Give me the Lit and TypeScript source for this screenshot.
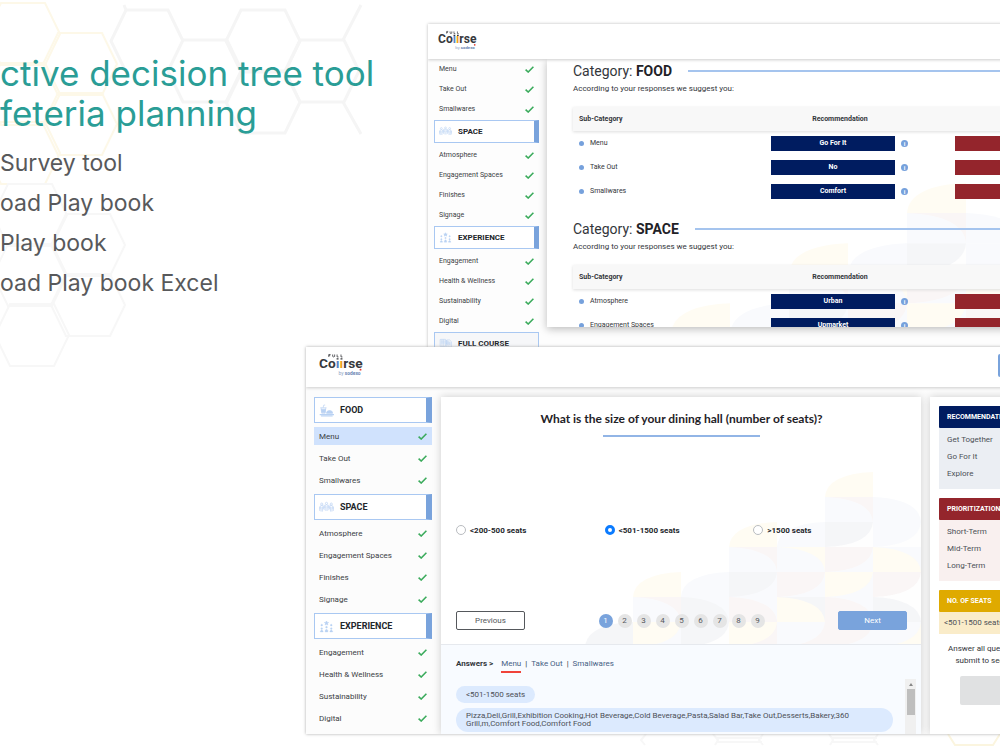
import { LitElement, html, svg, css, nothing } from "lit";
import { customElement, property, state } from "lit/decorators.js";
import { classMap } from "lit/directives/class-map.js";

type IconName = "food" | "space" | "experience" | "course";
interface Group {
  name: string;
  icon: IconName;
  items: string[];
}

const GROUPS: Group[] = [
  { name: "FOOD", icon: "food", items: ["Menu", "Take Out", "Smallwares"] },
  { name: "SPACE", icon: "space", items: ["Atmosphere", "Engagement Spaces", "Finishes", "Signage"] },
  { name: "EXPERIENCE", icon: "experience", items: ["Engagement", "Health & Wellness", "Sustainability", "Digital"] },
];

const person = (x: number, y: number) => svg`
  <circle cx=${x} cy=${y} r="1.6" />
  <path d="M${x - 2.4} ${y + 7}v-3q0-2 2.4-2t2.4 2v3M${x - 1} ${y + 4}v7M${x + 1} ${y + 4}v7" />`;

const ICONS = {
  food: svg`
    <path d="M2 5h9M3 5l1 8h5l1-8M6 5l1-4h2" />
    <path d="M3.500 7h6l-.6 5H4.200z" fill="currentColor" />
    <path d="M11 13q0-4 4.500-4t4.500 4z" fill="currentColor" />
    <path d="M1 15h21M3 17h17M11 14.500h9" stroke-width="1.600" />`,
  space: svg`${person(4, 4)}${person(11, 3)}${person(18, 4)}
    <path d="M1 8v6M7.500 5v8M14.500 5v8M21 8v6" />`,
  experience: svg`
    <path d="M11 1l1 2 2 .2-1.500 1.400.4 2L11 5.600 9.100 6.600l.4-2L8 3.200 10 3z" fill="currentColor" />
    <g fill="currentColor" stroke-width=".5">
      <circle cx="4" cy="7" r="1.300" /><circle cx="18" cy="7" r="1.300" />
      <circle cx="4" cy="12" r="1.300" /><circle cx="11" cy="10" r="1.300" /><circle cx="18" cy="12" r="1.300" />
      <path d="M2 16q2-4 4 0v1H2zM9 15q2-4 4 0v2H9zM16 16q2-4 4 0v1h-4z" />
    </g>`,
  course: svg`
    <path d="M2 2h9v12H2zM3 5h7M3 8h7M5 2v12M8 2v12" />
    <path d="M13 3h5l3 3v9h-8zM12 9l6 6" />
    <path d="M12 4l7 3v5l-7-3z" fill="currentColor" opacity=".6" />`,
};

/* Brand mark: coloured double-i in place of the "u" */
@customElement("brand-logo")
export class BrandLogo extends LitElement {
  static styles = css`
    :host { display: block; }
    svg { display: block; width: 100%; height: auto; overflow: visible; }
    .word { font: 700 14px Roboto, sans-serif; fill: #37393d; }
    .by { font: 400 5px Roboto, sans-serif; fill: #8fa4c4; }
    .blue { fill: #5a83c4; }
    .amber { fill: #f0a21c; }
    .sub { font-weight: 700; fill: #6b86b3; }
  `;
  render() {
    return html`<svg viewBox="0 0 44 22" role="img" aria-label="Full Course by Sodexo">
      <text class="word" x="0" y="14">Co<tspan class="blue">ı</tspan><tspan class="amber">ı</tspan>rse</text>
      <path d="M10 3V.500h1.800M10 1.700h1.500M14 .500V2.500q1 1 2 0V.500M18.500.500V3H20M22.500.500V3H24" fill="none" stroke="#37393d" stroke-width=".8" />
      <path d="M18 5h2M22 5h2" stroke="#37393d" stroke-width="1.400" />
      <text class="by" x="20" y="21">by <tspan class="sub">sodexo</tspan></text>
      <circle cx="42.500" cy="16" r="1" fill="#e23b30" />
    </svg>`;
  }
}

/* Category list with completion ticks */
@customElement("category-nav")
export class CategoryNav extends LitElement {
  @property({ type: Boolean, reflect: true }) compact = false;
  @property() active = "";

  static styles = css`
    :host {
      display: block;
      --row: 22px; --box: 26px; --above: 3px; --text: 8px; --title: 9px; --bar: 6px; --icon: 15px;
      font-family: Roboto, sans-serif;
    }
    :host([compact]) {
      --row: 20px; --box: 23px; --above: 1px; --text: 7px; --title: 8px; --bar: 5px; --icon: 13px;
    }
    ul { list-style: none; margin: 0; padding: 0; }
    .box {
      box-sizing: border-box; display: flex; align-items: center; gap: 6px;
      width: 100%; height: var(--box); margin: var(--above) 0 2px; padding: 0 4px;
      border: 1px solid #a9c8f2; border-right: var(--bar) solid #79a3dc;
      background: #fff; color: #23262b; font: 700 var(--title) Roboto, sans-serif; text-align: left;
    }
    .box.last { border-right: 1px solid #a9c8f2; background: #f6f7f9; }
    .icon { width: var(--icon); height: var(--icon); color: #b9d2f3; fill: none; stroke: currentColor; stroke-width: 1; }
    .row { box-sizing: border-box; height: var(--row); padding: 2px 0; }
    .link {
      display: flex; align-items: center; justify-content: space-between; height: 100%;
      padding: 0 5px; color: #3b3e44; font-size: var(--text); text-decoration: none;
    }
    .link.on { background: #d0e2fd; }
    .tick { width: 9px; height: 7px; fill: none; stroke: #3bab5c; stroke-width: 1.600; }
  `;

  render() {
    const groups = this.compact
      ? [...GROUPS, { name: "FULL COURSE", icon: "course" as IconName, items: [] }]
      : GROUPS;
    return html`<nav aria-label="Categories">
      ${groups.map((g, i) => html`
        ${this.compact && i === 0 ? nothing : html`
          <button class=${classMap({ box: true, last: g.icon === "course" })}>
            <svg class="icon" viewBox="0 0 22 18" aria-hidden="true">${ICONS[g.icon]}</svg>${g.name}
          </button>`}
        <ul>
          ${g.items.map((t) => html`<li class="row">
            <a href="#" class=${classMap({ link: true, on: t === this.active })}>${t}
              <svg class="tick" viewBox="0 0 9 7" aria-hidden="true"><path d="M.6 3.600l2.600 2.400L8.400.8" /></svg>
            </a></li>`)}
        </ul>`)}
    </nav>`;
  }
}

/* Faint mosaic of petals that climbs to the right */
@customElement("petal-mosaic")
export class PetalMosaic extends LitElement {
  static styles = css`
    :host { display: block; pointer-events: none; opacity: 0.8; }
    svg { display: block; width: 100%; height: 100%; }
  `;
  render() {
    const c: Record<string, string> = { y: "#fffcf1", b: "#f8fafd", r: "#faf4f4", g: "#f3f4f7", w: "#fefefe" };
    /* column, row, ground, petal, corner of the petal's centre */
    const tiles: [number, number, string, string, string][] = [
      [5, 0, "", "y", "br"], [6, 1, "", "b", "bl"],
      [5, 1, "r", "b", "bl"], [4, 2, "", "b", "br"], [3, 2, "", "y", "br"],
      [5, 2, "w", "g", "tl"], [6, 2, "w", "b", "tl"],
      [3, 3, "r", "b", "bl"], [4, 3, "y", "b", "bl"], [5, 3, "b", "r", "tl"], [6, 3, "b", "y", "bl"],
      [1, 4, "", "y", "br"], [2, 4, "", "b", "br"], [3, 4, "b", "g", "tl"], [4, 4, "b", "r", "tl"], [5, 4, "b", "y", "tl"], [6, 4, "w", "r", "tl"],
      [1, 5, "r", "b", "bl"], [2, 5, "b", "g", "bl"], [3, 5, "b", "r", "bl"], [4, 5, "g", "y", "bl"], [5, 5, "b", "r", "bl"], [6, 5, "w", "g", "bl"],
      [0, 6, "", "g", "br"], [1, 6, "b", "y", "tl"], [2, 6, "w", "g", "tl"], [3, 6, "r", "y", "tl"], [4, 6, "r", "b", "tl"], [5, 6, "b", "r", "tl"], [6, 6, "y", "b", "tl"],
    ];
    const arc: Record<string, string> = {
      br: "M48 0V25H0Q2 2 48 0z",
      bl: "M0 0Q46 2 48 25H0z",
      tl: "M0 0H48Q46 23 0 25z",
    };
    return html`<svg viewBox="0 0 336 172" preserveAspectRatio="none" aria-hidden="true">
      ${tiles.map(([x, y, ground, petal, k]) => svg`<g transform="translate(${x * 48} ${y * 25})">
        ${ground ? svg`<rect width="48" height="25" fill=${c[ground]} />` : nothing}
        <path d=${arc[k]} fill=${c[petal]} /></g>`)}
    </svg>`;
  }
}

/* Results window */
@customElement("results-window")
export class ResultsWindow extends LitElement {
  static styles = css`
    :host {
      display: flex; flex-direction: column; overflow: hidden;
      background: #fdfdfd; box-shadow: 0 0 3px #bbb; font-family: Roboto, sans-serif; color: #33363b;
    }
    .head { position: relative; flex: none; height: 35px; padding: 7px 10px; box-sizing: border-box; background: #fff; box-shadow: 0 1px 3px #ccc; z-index: 1; }
    .logo { width: 38px; }
    .body { display: flex; min-height: 0; }
    .nav { flex: none; width: 105px; padding: 0 8px 0 6px; }
    .panel { position: relative; isolation: isolate; height: 268px; overflow: hidden; box-sizing: border-box; padding: 0 26px; background: #fff; }
    .shade { flex: 1; min-width: 0; height: 268px; box-shadow: 0 2px 8px #bbb; }
    .mosaic { position: absolute; z-index: -1; left: 65px; top: 124px; width: 413px; height: 207px; }
    .section { height: 158px; }
    .title { display: flex; align-items: center; gap: 16px; margin: 0; height: 24px; font-size: 14px; font-weight: 400; }
    .title::after { content: ""; flex: 1; height: 2px; background: #a5c4ee; }
    .name { color: #1f2227; }
    .note { margin: 0; height: 24px; line-height: 12px; font-size: 8px; }
    table { table-layout: fixed; width: 566px; border-collapse: collapse; font-size: 7px; }
    .c1 { width: 198px; }
    .c2 { width: 184px; }
    th { height: 24px; padding: 0 46px 0 0; background: #f8f8f8; text-align: center; }
    th:first-child { padding: 0 6px; text-align: left; }
    thead { box-shadow: 0 1px 3px #ddd; }
    td { height: 24px; padding: 0; }
    td:first-child { padding: 0 6px; }
    .label { display: flex; align-items: center; gap: 6px; }
    .dot { width: 5px; height: 5px; border-radius: 50%; background: #76a1dc; }
    .cell { display: flex; align-items: center; gap: 6px; }
    .tag { width: 124px; height: 15px; padding: 0; border: 0; background: #001c60; color: #fff; font: 700 7px Roboto, sans-serif; }
    .tag.red { background: #94252c; }
    .info { width: 7px; height: 7px; border-radius: 50%; background: #76a1dc; color: #fff; font-size: 6px; font-weight: 700; line-height: 7px; text-align: center; }
  `;

  private section(name: string, rows: [string, string][]) {
    return html`<section class="section">
      <h2 class="title"><span>Category: <b class="name">${name}</b></span></h2>
      <p class="note">According to your responses we suggest you:</p>
      <table>
        <colgroup><col class="c1" /><col class="c2" /><col class="c2" /></colgroup>
        <thead><tr><th>Sub-Category</th><th>Recommendation</th><th>Prioritization</th></tr></thead>
        <tbody>
          ${rows.map(([label, value]) => html`<tr>
            <td><span class="label"><i class="dot"></i>${label}</span></td>
            <td><div class="cell"><button class="tag">${value}</button><span class="info">i</span></div></td>
            <td><div class="cell"><button class="tag red" aria-label="Priority"></button></div></td>
          </tr>`)}
        </tbody>
      </table>
    </section>`;
  }

  render() {
    return html`
      <header class="head"><brand-logo class="logo"></brand-logo></header>
      <div class="body">
        <category-nav class="nav" compact></category-nav>
        <div class="shade"><main class="panel">
          <petal-mosaic class="mosaic"></petal-mosaic>
          ${this.section("FOOD", [["Menu", "Go For It"], ["Take Out", "No"], ["Smallwares", "Comfort"]])}
          ${this.section("SPACE", [["Atmosphere", "Urban"], ["Engagement Spaces", "Upmarket"]])}
        </main></div>
      </div>`;
  }
}

/* Survey window */
@customElement("survey-window")
export class SurveyWindow extends LitElement {
  @state() private seats = 1;
  @state() private page = 1;

  static styles = css`
    :host {
      display: flex; flex-direction: column; overflow: hidden;
      background: #fcfcfc; box-shadow: 0 0 3px #aaa; font-family: Roboto, sans-serif; color: #33363b; font-size: 8px;
    }
    .head { position: relative; z-index: 1; flex: none; display: flex; justify-content: space-between; box-sizing: border-box; height: 40px; padding: 7px 31px 6px 13px; background: #fff; box-shadow: 0 1px 3px #ccc; }
    .logo { width: 43px; }
    .submit { width: 50px; height: 23px; border: 0; border-radius: 2px; background: #79a3dc; }
    .body { flex: 1; display: flex; gap: 9px; min-height: 0; padding-top: 10px; }
    .nav { flex: none; width: 118px; margin: -3px 0 0; padding: 0 0 0 8px; }
    .panel { position: relative; flex: 1; display: flex; flex-direction: column; background: #fff; box-shadow: 0 0 8px #ccc; }
    .mosaic { position: absolute; z-index: -1; right: 0; top: 75px; width: 336px; height: 172px; }
    .question { position: relative; isolation: isolate; box-sizing: border-box; height: 247px; padding: 14px 14px 14px 15px; display: flex; flex-direction: column; justify-content: space-between; }
    .ask { display: flex; flex-direction: column; align-items: center; gap: 8px; margin: 0; font: 700 12px/16px Lato, sans-serif; color: #1f2227; }
    .ask::after { content: ""; width: 157px; height: 2px; background: #92b5e6; }
    .choices { display: grid; grid-template-columns: repeat(3, 1fr); margin: 0; padding: 12px 5px 0 0; border: 0; }
    .choice { display: flex; align-items: center; gap: 4px; font-weight: 700; color: #23262b; }
    .radio { appearance: none; box-sizing: border-box; width: 10px; height: 10px; margin: 0; border: 1px solid #b9bcc0; border-radius: 50%; background: #fff; }
    .radio:checked { border: 3px solid #0b7bff; }
    .steps { display: flex; align-items: center; justify-content: space-between; }
    .btn { box-sizing: border-box; width: 69px; height: 19px; padding: 0; border: 1px solid #55585c; border-radius: 2px; background: #fff; color: #55585c; font: 8px Roboto, sans-serif; }
    .btn.next { border-color: #79a3dc; background: #79a3dc; color: #fff; }
    .pages { display: flex; gap: 5px; }
    .page { width: 14px; height: 14px; padding: 0; border: 0; border-radius: 50%; background: #e5e5e5; color: #55585c; font: 8px Roboto, sans-serif; }
    .page.on { background: #79a3dc; color: #fff; }
    .answers { position: relative; flex: 1; min-height: 0; display: flex; flex-direction: column; gap: 6px; padding: 14px 5px 0 15px; background: #f8fbff; border-top: 1px solid #e6e9ee; }
    .tabs { display: flex; gap: 4px; line-height: 10px; }
    .lead { margin-right: 4px; }
    .tab { height: 12px; color: #476185; text-decoration: none; }
    .tab.on { border-bottom: 2px solid #f0433a; }
    .list { flex: 1; display: flex; justify-content: space-between; min-height: 0; overflow: hidden; }
    .chips { flex: 1; margin: 0 12px 0 0; padding: 7px 0 0; list-style: none; }
    .chip { box-sizing: border-box; width: fit-content; margin-bottom: 5px; padding: 4px 10px; border-radius: 13px; background: #dceafe; color: #4c5057; line-height: 9px; }
    .chip.wide { width: 100%; padding-right: 40px; line-height: 8px; }
    .rail { display: flex; flex-direction: column; align-items: center; gap: 3px; width: 11px; padding-top: 4px; background: #f0f0f0; }
    .up { border: 2px solid transparent; border-top: 0; border-bottom: 3px solid #888; }
    .thumb { width: 8px; height: 26px; background: #bebebe; }
    .aside { flex: none; box-sizing: border-box; width: 149px; padding: 9px; background: #fff; box-shadow: 0 0 8px #ccc; }
    .card { margin-bottom: 9px; }
    .cap { margin: 0; padding: 0 8px; font-size: 7px; line-height: 22px; color: #fff; border-radius: 1px; }
    .facts { margin: 0; padding: 3px 8px 7px; list-style: none; line-height: 17px; color: #4c5057; }
    .facts.seats { padding: 2px 5px 3px; }
    .navy { background: #001c60; } .navy-soft { background: #ebeef3; }
    .wine { background: #94252c; } .wine-soft { background: #f9f0ef; }
    .gold { background: #dfaa00; } .gold-soft { background: #faecc9; }
    .hint { width: fit-content; margin: 0 0 9px; padding-left: 9px; line-height: 12px; text-align: center; }
    .send { display: block; width: 90px; height: 29px; margin: 0 auto; border: 0; border-radius: 2px; background: #e0e1e2; }
  `;

  render() {
    const choices = ["<200-500 seats", "<501-1500 seats", ">1500 seats"];
    return html`
      <header class="head">
        <brand-logo class="logo"></brand-logo>
        <button class="submit" aria-label="Account"></button>
      </header>
      <div class="body">
        <category-nav class="nav" active="Menu"></category-nav>
        <main class="panel">
          <section class="question">
            <petal-mosaic class="mosaic"></petal-mosaic>
            <h1 class="ask">What is the size of your dining hall (number of seats)?</h1>
            <fieldset class="choices" aria-label="Number of seats">
              ${choices.map((c, i) => html`<label class="choice">
                <input class="radio" type="radio" name="seats" .checked=${i === this.seats} @change=${() => (this.seats = i)} />${c}</label>`)}
            </fieldset>
            <div class="steps">
              <button class="btn">Previous</button>
              <div class="pages">
                ${[1, 2, 3, 4, 5, 6, 7, 8, 9].map((n) => html`<button
                  class=${classMap({ page: true, on: n === this.page })} @click=${() => (this.page = n)}>${n}</button>`)}
              </div>
              <button class="btn next">Next</button>
            </div>
          </section>
          <section class="answers">
            <div class="tabs"><b class="lead">Answers &gt;</b>
              <a class="tab on" href="#">Menu</a><span>|</span>
              <a class="tab" href="#">Take Out</a><span>|</span>
              <a class="tab" href="#">Smallwares</a></div>
            <div class="list">
              <ul class="chips">
                <li class="chip">&lt;501-1500 seats</li>
                <li class="chip wide">Pizza,Deli,Grill,Exhibition Cooking,Hot Beverage,Cold Beverage,Pasta,Salad Bar,Take Out,Desserts,Bakery,360 Grill,m,Comfort Food,Comfort Food</li>
              </ul>
              <div class="rail" aria-hidden="true"><i class="up"></i><i class="thumb"></i></div>
            </div>
          </section>
        </main>
        <aside class="aside">
          <section class="card"><h2 class="cap navy">RECOMMENDATIONS</h2>
            <ul class="facts navy-soft"><li>Get Together</li><li>Go For It</li><li>Explore</li></ul></section>
          <section class="card"><h2 class="cap wine">PRIORITIZATION</h2>
            <ul class="facts wine-soft"><li>Short-Term</li><li>Mid-Term</li><li>Long-Term</li></ul></section>
          <section class="card"><h2 class="cap gold">NO. OF SEATS</h2>
            <ul class="facts seats gold-soft"><li>&lt;501-1500 seats</li></ul></section>
          <p class="hint">Answer all questions and<br />submit to see results</p>
          <button class="send" aria-label="Submit"></button>
        </aside>
      </div>`;
  }
}

@customElement("app-root")
export class AppRoot extends LitElement {
  static styles = css`
    :host { display: block; }
    .slide { position: relative; min-height: 100vh; overflow: hidden; background: #fff; font-family: Inter, sans-serif; }
    .comb { position: absolute; left: 0; top: 0; width: 1000px; height: 750px; fill: none; }
    .copy { position: relative; padding-top: 53px; }
    .headline { margin: 0 0 10px; color: #2a9d96; font-size: 35px; font-weight: 400; line-height: 40px; }
    .points { margin: 0; padding: 0; list-style: none; color: #58595b; font-size: 23px; line-height: 40px; }
    .results { position: absolute; left: 428px; right: -160px; top: 24px; height: 380px; }
    .survey { position: absolute; left: 306px; right: -79px; top: 347px; height: 387px; }
  `;

  private hex(x: number, y: number) {
    return svg`<path d="M${x - 22} ${y - 31}h44l15 31-15 31h-44l-15-31z" />`;
  }

  render() {
    return html`<div class="slide">
      <svg class="comb" viewBox="0 0 1000 750" aria-hidden="true">
        <g stroke="#f5f5f5" stroke-width="3">
          ${[[205, 71], [263, 41], [322, 71], [263, 102]].map(([x, y]) => this.hex(x, y))}
          <path d="M124 5l2 5h42l15 31M126 10l-15 31 15 31M343 40l18-35M343 102l18 32" />
        </g>
        <g stroke="#fdf8e8" stroke-width="2">
          ${[[23, 34], [80, 64], [80, 124], [23, 94], [23, 153]].map(([x, y]) => this.hex(x, y))}
        </g>
        <g stroke="#f7f7f7" stroke-width="2">
          ${[[30, 215], [88, 245], [88, 305], [30, 275], [32, 335]].map(([x, y]) => this.hex(x, y))}
          <path d="M646 734l-5 6 4 5M713 734l5 6-3 5M716 738h46M716 742h46M763 734l-4 6 4 5M829 734l4 6-3 5M831 738h46M831 742h46M878 734l-4 6 4 5" />
        </g>
        <path d="M948 734l7 11h38l7-11" stroke="#fbf5df" stroke-width="2" />
      </svg>
      <div class="copy">
        <h1 class="headline">ctive decision tree tool<br />feteria planning</h1>
        <ul class="points">
          <li>Survey tool</li><li>oad Play book</li><li>Play book</li><li>oad Play book Excel</li>
        </ul>
      </div>
      <results-window class="results"></results-window>
      <survey-window class="survey"></survey-window>
    </div>`;
  }
}
